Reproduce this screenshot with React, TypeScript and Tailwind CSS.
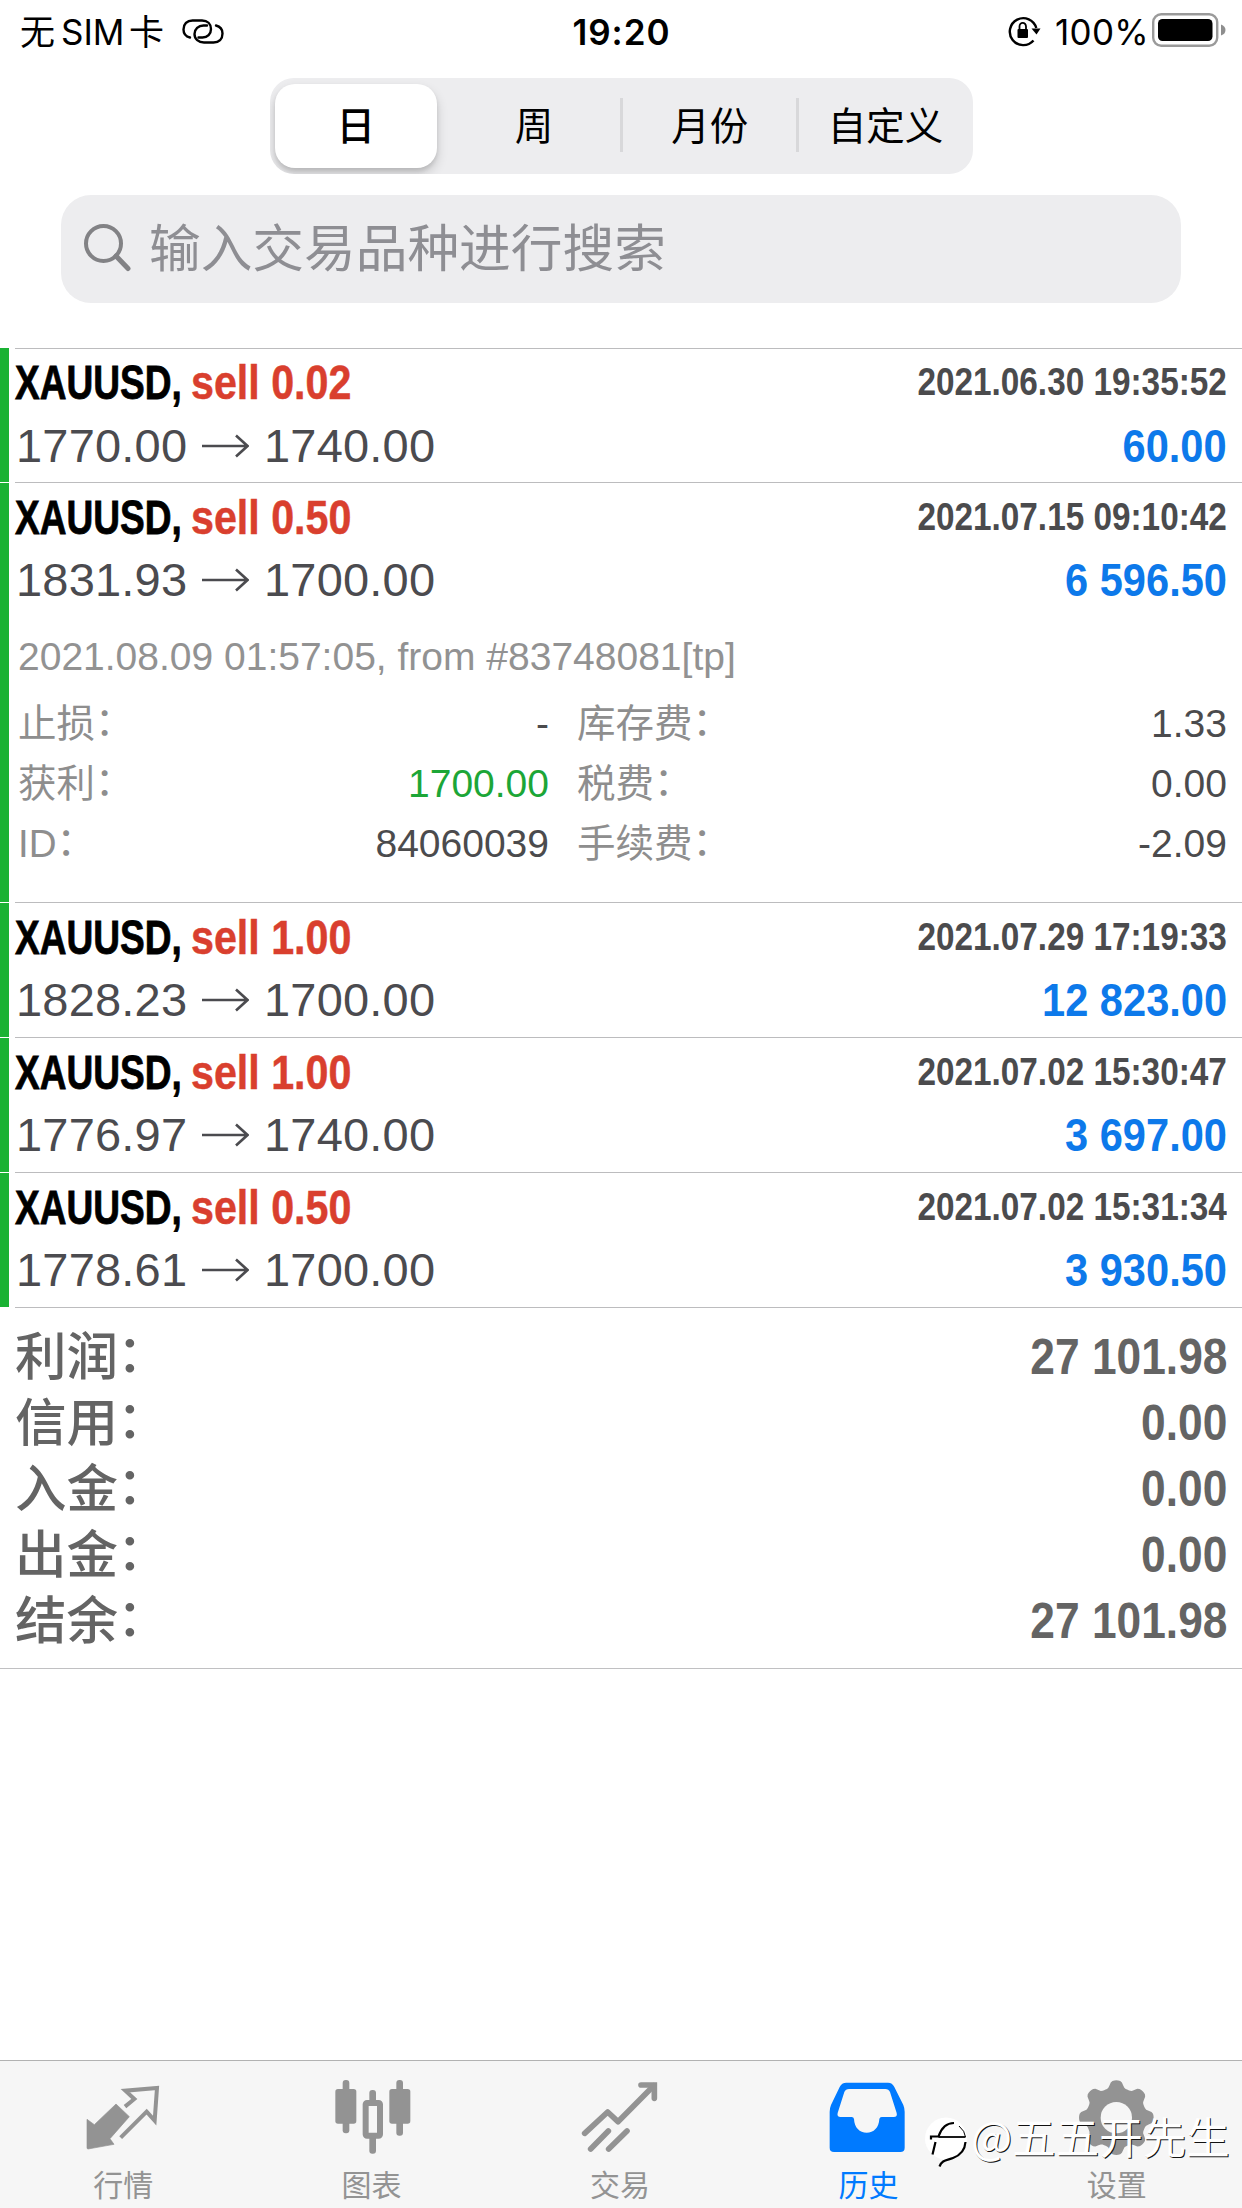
import React from 'react';
import { clsx } from 'clsx';

interface Deal {
  volume: string;
  open: string;
  close: string;
  time: string;
  profit: string;
  expanded?: boolean;
}

const DEALS: Deal[] = [
  { volume: '0.02', open: '1770.00', close: '1740.00', time: '2021.06.30 19:35:52', profit: '60.00' },
  { volume: '0.50', open: '1831.93', close: '1700.00', time: '2021.07.15 09:10:42', profit: '6 596.50', expanded: true },
  { volume: '1.00', open: '1828.23', close: '1700.00', time: '2021.07.29 17:19:33', profit: '12 823.00' },
  { volume: '1.00', open: '1776.97', close: '1740.00', time: '2021.07.02 15:30:47', profit: '3 697.00' },
  { volume: '0.50', open: '1778.61', close: '1700.00', time: '2021.07.02 15:31:34', profit: '3 930.50' },
];

const SUMMARY = [
  { label: '利润', value: '27 101.98' },
  { label: '信用', value: '0.00' },
  { label: '入金', value: '0.00' },
  { label: '出金', value: '0.00' },
  { label: '结余', value: '27 101.98' },
];

const SEGMENTS = ['日', '周', '月份', '自定义'];

const StatusBar = () => (
  <header className="flex h-[64px] items-center justify-between pl-[20px] pr-[15px] font-['Inter','Noto_Sans_CJK_SC',sans-serif] text-[35px] leading-[64px] text-black">
    <div className="flex flex-1 items-center">
      <span className="w-[162px] whitespace-nowrap">
        无<span className="mr-[4px] ml-[6px] inline-block w-[64px]">SIM</span>卡
      </span>
      <svg className="mb-[2px] h-[25px] w-[42px]" viewBox="0 0 42 25" fill="none" stroke="currentColor" strokeWidth="2.4" strokeLinecap="round">
        <path d="M8 18.5C4 17.5 1.5 14.5 1.5 10.500C1.500 5 5 1.500 10.500 1.500H20C25.500 1.500 29 5 29 10C29 15 25.500 18.500 20.500 18.500H16.500" />
        <path d="M34 6.500C38 7.500 40.500 10.500 40.500 14.500C40.500 20 37 23.500 31.500 23.500H22C16.500 23.500 12.500 20 12.500 15C12.500 10 16.500 6.500 21.500 6.500H25" />
      </svg>
    </div>
    <div className="mr-[4px] font-semibold tracking-[1px]">19:20</div>
    <div className="flex flex-1 items-center justify-end">
      <svg className="mr-[14px] mb-[2px] h-[34px] w-[34px]" viewBox="0 0 34 34" fill="none" stroke="currentColor">
        <path d="M26.500 26.500A13.500 13.500 0 1 1 29.300 14" strokeWidth="2.400" />
        <path d="M24.500 14.500H33.500L29.500 20.500Z" fill="currentColor" stroke="none" />
        <rect x="10.500" y="15" width="10.500" height="9" rx="1" fill="currentColor" stroke="none" />
        <path d="M12.500 15.500V12.500A3.200 3.600 0 0 1 19 12.500V15.500" strokeWidth="1.800" />
      </svg>
      <span className="mr-[4px] block w-[93px] tracking-[0.300px] whitespace-nowrap">100%</span>
      <svg className="mb-[5px] h-[34px] w-[75px]" viewBox="0 0 75 34">
        <rect x="1.200" y="1.200" width="64" height="31.600" rx="8" fill="none" stroke="#9a9a9a" strokeWidth="2.400" />
        <rect x="6" y="6" width="54.500" height="22" rx="4.500" fill="#000" />
        <path d="M69 11.500Q73.500 13 73.500 17T69 22.500Z" fill="#8e8e8e" />
      </svg>
    </div>
  </header>
);

const SegmentedControl = () => (
  <div className="mx-auto mt-[14px] grid h-[96px] w-[703px] grid-cols-4 overflow-hidden rounded-[24px] bg-[#ededef] font-['Noto_Sans_CJK_SC',sans-serif] text-[38.500px] text-black">
    {SEGMENTS.map((label, i) => (
      <div key={label} className="relative flex items-center justify-center">
        {i === 0 ? (
          <div className="mr-[8px] ml-[5px] flex h-[84px] flex-1 items-center justify-center rounded-[20px] bg-white font-medium shadow-[0_6px_12px_rgba(0,0,0,0.16),0_3px_4px_rgba(0,0,0,0.1)]">
            <span className="mb-[5px]">{label}</span>
          </div>
        ) : (
          <span className="mb-[5px] ml-[2px]">{label}</span>
        )}
        {i > 1 && <div className="absolute top-[20px] -left-px h-[54px] w-[3px] bg-[#d8d8da]" />}
      </div>
    ))}
  </div>
);

const SearchField = () => (
  <div className="mx-auto mt-[21px] flex h-[108px] w-[1120px] items-center rounded-[30px] bg-[#ededef] pl-[22px] font-['Noto_Sans_CJK_SC',sans-serif] text-[51.700px] text-[#8e8e93]">
    <svg className="mr-[16px] h-[50px] w-[50px]" viewBox="0 0 50 50" fill="none" stroke="#828285">
      <circle cx="20.500" cy="19.500" r="17.500" strokeWidth="4" />
      <path d="M33 32L45 44.500" strokeWidth="5" strokeLinecap="round" />
    </svg>
    <span className="mb-[8px] leading-[100px]">输入交易品种进行搜索</span>
  </div>
);

const Detail: React.FC<{ label: string; value: string; green?: boolean }> = ({ label, value, green }) => (
  <div className="flex justify-between leading-[60px]">
    <span className="text-[38.500px] text-[#8e8e8e]">
      {label}
      <span className="relative -top-[2px]">：</span>
    </span>
    <span className={green ? 'text-[#1ca637]' : 'text-[#4b4b4d]'}>{value}</span>
  </div>
);

const DealDetails = () => (
  <div className="mt-[16px] pl-[3px] text-[39px]">
    <div className="leading-[60px] whitespace-nowrap text-[#929292]">
      2021.08.09 01:57:05, from #83748081[tp]
    </div>
    <div className="mt-[7px] grid grid-cols-[531px_1fr] gap-x-[28px]">
      <Detail label="止损" value="-" />
      <Detail label="库存费" value="1.33" />
      <Detail label="获利" value="1700.00" green />
      <Detail label="税费" value="0.00" />
      <Detail label="ID" value="84060039" />
      <Detail label="手续费" value="-2.09" />
    </div>
  </div>
);

const DealRow: React.FC<{ deal: Deal; first: boolean }> = ({ deal, first }) => (
  <div className={clsx('flex', deal.expanded ? 'h-[420px]' : first ? 'h-[134px]' : 'h-[135px]')}>
    <div className={clsx('w-[9px] bg-[#1ab233]', !first && 'mt-px')} />
    <div className={clsx('ml-[6px] flex-1 border-t border-[#bcbcbe] pr-[15px]', first ? 'pt-[2px]' : 'pt-[3px]')}>
      <div className={clsx('flex justify-between font-bold', first ? 'h-[63px]' : 'h-[62px]')}>
        <div className="flex text-[48px] leading-[63px] whitespace-nowrap">
          <div className="w-[176px] text-black">
            <span className="inline-block origin-left scale-x-[0.772] [-webkit-text-stroke:0.800px_currentColor]">XAUUSD,</span>
          </div>
          <span className="inline-block origin-left scale-x-[0.858] text-[#d93f2e] [-webkit-text-stroke:0.500px_currentColor]">sell {deal.volume}</span>
        </div>
        <span className="origin-right scale-x-[0.877] text-[38px] leading-[62px] text-[#4b4b4d]">{deal.time}</span>
      </div>
      <div className="flex h-[63px] items-center justify-between text-[47px] leading-[63px]">
        <div className="flex items-center text-[#4b4b4f]">
          <span className="ml-px w-[186px] tracking-[0.200px]">{deal.open}</span>
          <svg className="h-[26px] w-[47px]" viewBox="0 0 47 26" fill="none" stroke="currentColor" strokeWidth="2.600">
            <path d="M0 13H45M34 2.500L45.500 13L34 23.500" />
          </svg>
          <span className="ml-[15px] tracking-[0.200px]">{deal.close}</span>
        </div>
        <span className="origin-right scale-x-[0.885] font-bold whitespace-nowrap text-[#0d79ea]">{deal.profit}</span>
      </div>
      {deal.expanded && <DealDetails />}
    </div>
  </div>
);

const Summary = () => (
  <div className="border-b border-[#c0c0c2]">
    <div className="ml-[15px] h-[361px] border-t border-[#bcbcbe] pt-[16px] pr-[15px]">
      {SUMMARY.map((row) => (
        <div key={row.label} className="flex justify-between text-[50px] leading-[66px] text-[#646464]">
          <span className="text-[51.500px] font-medium">
            {row.label}
            <span className="relative -top-[3px] -left-px">：</span>
          </span>
          <span className="origin-right scale-x-[0.886] font-bold">{row.value}</span>
        </div>
      ))}
    </div>
  </div>
);

// Outline of an eight-toothed cog centred on (115, 170)
const cogPath = () => {
  const pts: string[] = [];
  for (let a = 0; a < 360; a += 3) {
    const t = (a * Math.PI) / 180;
    const r = 101 + 11.5 * Math.tanh(1.8 * Math.cos(8 * t));
    pts.push(`${(115 + r * Math.sin(t)).toFixed(1)} ${(170 - r * Math.cos(t)).toFixed(1)}`);
  }
  return `M${pts.join('L')}Z`;
};

const TABS = [
  {
    label: '行情',
    icon: (
      <>
        <path d="M9 175L31 191L96 129L136 167L78 233L90 250L12 264Q9 264 9 260Z" fill="currentColor" stroke="currentColor" strokeWidth="2" strokeLinejoin="round" />
        <path d="M123 137L151 114L124 89L219 81L212 179L188 152L110 230" fill="none" stroke="currentColor" strokeWidth="12" />
      </>
    ),
  },
  {
    label: '图表',
    icon: (
      <g fill="currentColor">
        <rect x="29" y="57" width="20" height="160" rx="9" />
        <rect x="7" y="84" width="63" height="104" rx="8" />
        <rect x="109" y="87" width="20" height="40" rx="9" />
        <rect x="109" y="222" width="20" height="56" rx="9" />
        <rect x="98" y="126" width="43" height="98" rx="4" fill="none" stroke="currentColor" strokeWidth="18" />
        <rect x="190" y="57" width="20" height="167" rx="9" />
        <rect x="169" y="84" width="63" height="104" rx="8" />
      </g>
    ),
  },
  {
    label: '交易',
    icon: (
      <g fill="none" stroke="currentColor" strokeWidth="17" strokeLinecap="round">
        <path d="M11 217L80 153L111 182L218 74" strokeLinejoin="round" />
        <path d="M180 72H220V112" />
        <path d="M29 264L82 210M83 264L138 210" />
      </g>
    ),
  },
  {
    label: '历史',
    active: true,
    icon: (
      <path
        fill="currentColor"
        fillRule="evenodd"
        d="M2 260V152Q2 142 6 132L32 78Q38 65 52 65H177Q190 65 196 78L223 132Q227 142 227 152V260Q227 273 214 273H15Q2 273 2 260ZM60 84Q50 84 46 93L26 156Q23 168 35 168H68Q74 168 75 174C76 200 92 215 113 215S150 200 151 174Q152 168 158 168H194Q206 168 203 156L183 93Q179 84 169 84Z"
      />
    ),
  },
  {
    label: '设置',
    icon: (
      <>
        <path d={cogPath()} fill="currentColor" />
        <circle cx="115" cy="170" r="47" fill="#f6f6f6" />
      </>
    ),
  },
];

const Watermark = () => (
  <div className="absolute top-[54px] left-[924px] flex items-start whitespace-nowrap">
    <svg className="h-[54px] w-[44px]" viewBox="0 0 44 54">
      <circle cx="22" cy="23.500" r="21" fill="#fff" />
      <path d="M7 24.500V21.500H14.500C17 14 21 8 30 8" fill="none" stroke="#000" strokeWidth="2.200" />
      <path d="M14.500 22H41.500" fill="none" stroke="#000" strokeWidth="1.800" />
      <path d="M41.500 22Q41 16 35 11" fill="none" stroke="#000" strokeWidth="1" />
      <path d="M11.500 27L8.500 39.500M41.500 27C41 34 37 40 29 43C22 45.500 18 45 15.500 51.500" fill="none" stroke="#000" strokeWidth="2.200" />
    </svg>
    <span className="ml-[3px] font-['Noto_Sans_CJK_SC',sans-serif] text-[43.500px] leading-[41px] text-white [text-shadow:1px_1px_0_#111]">
      @五五开先生
    </span>
  </div>
);

const TabBar = () => (
  <nav className="relative mt-auto grid h-[148px] grid-cols-5 border-t border-[#b2b2b2] bg-[#f6f6f6] font-['Noto_Sans_CJK_SC',sans-serif]">
    {TABS.map((tab) => (
      <div key={tab.label} className={clsx('flex flex-col items-center', tab.active ? 'text-[#007aff]' : 'text-[#939393]')}>
        <svg className="h-[96px] w-[80px] shrink-0" viewBox="0 0 240 288">
          {tab.icon}
        </svg>
        <span className="mt-[6px] mr-[2px] text-[30px] leading-[40px]">{tab.label}</span>
      </div>
    ))}
    <Watermark />
  </nav>
);

export default function App() {
  return (
    <div className="flex h-[2208px] w-[1242px] flex-col overflow-hidden bg-white font-['Liberation_Sans','Noto_Sans_CJK_SC',sans-serif]">
      <StatusBar />
      <SegmentedControl />
      <SearchField />
      <main className="mt-[45px]">
        {DEALS.map((deal, i) => (
          <DealRow key={deal.time} deal={deal} first={i === 0} />
        ))}
        <Summary />
      </main>
      <TabBar />
    </div>
  );
}
